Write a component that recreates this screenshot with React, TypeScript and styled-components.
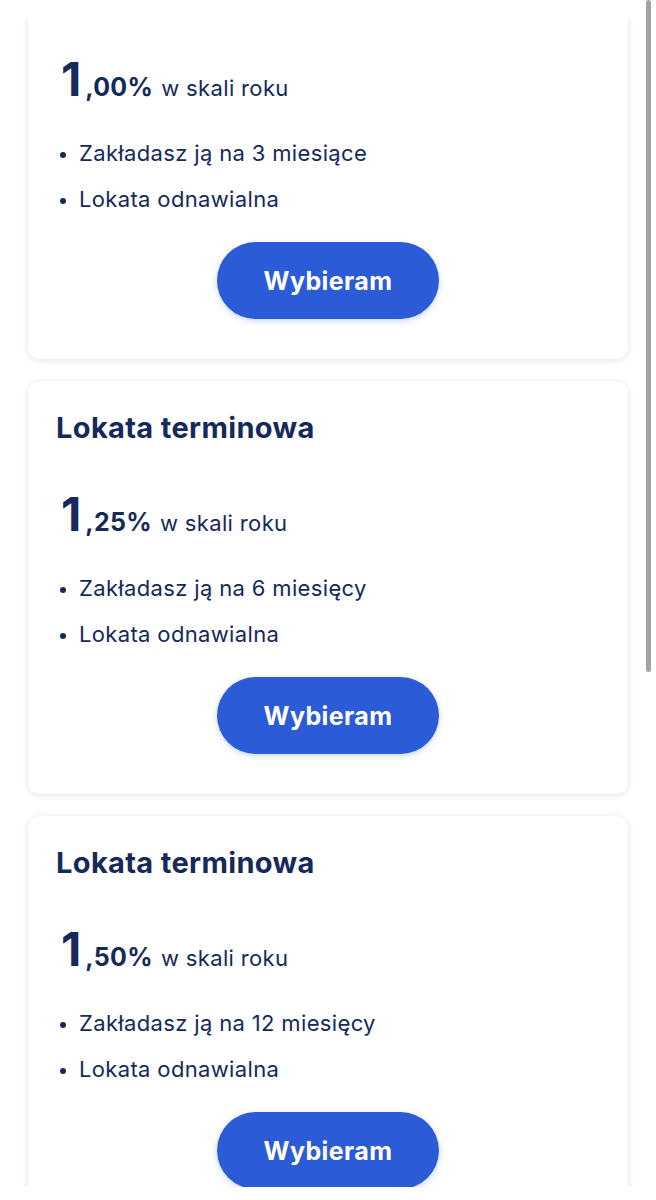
import React from 'react';
import styled, { createGlobalStyle } from 'styled-components';

interface IDeposit {
  id: number;
  rate: string;
  months: string;
}

const deposits: IDeposit[] = [
  { id: 1, rate: '00', months: '3 miesiące' },
  { id: 2, rate: '25', months: '6 miesięcy' },
  { id: 3, rate: '50', months: '12 miesięcy' },
];

const GlobalStyle = createGlobalStyle`
  body {
    margin: 0;
    background: #ffffff;
    font-family: Inter, "Noto Sans", sans-serif;
    color: #16295b;
  }
`;

const App: React.FC = () => {
  return (
    <Frame>
      <GlobalStyle />
      <ScrollThumb />
      <Viewport>
        <CardList>
          {deposits.map(({ id, rate, months }) => (
            <Card key={id}>
              <Title>Lokata terminowa</Title>
              <RateRow>
                <RateWhole>1</RateWhole>
                <RateFraction>,{rate}%</RateFraction>
                <RateLabel>w skali roku</RateLabel>
              </RateRow>
              <Features>
                <Feature>Zakładasz ją na {months}</Feature>
                <Feature>Lokata odnawialna</Feature>
              </Features>
              <ButtonRow>
                <ChooseButton>Wybieram</ChooseButton>
              </ButtonRow>
            </Card>
          ))}
        </CardList>
      </Viewport>
    </Frame>
  );
};

const Frame = styled.div`
  position: relative;
  width: 656px;
  height: 1200px;
  padding-top: 20px;
  box-sizing: border-box;
  overflow: hidden;
`;

const ScrollThumb = styled.div`
  position: absolute;
  top: 0;
  right: 5px;
  width: 5px;
  height: 672px;
  border-radius: 3px;
  background: #a3a3a3;
`;

const Viewport = styled.div`
  height: 1167px;
  overflow: hidden;
`;

const CardList = styled.div`
  display: flex;
  flex-direction: column;
  gap: 22px;
  margin-top: -74px;
  padding: 0 28px;
`;

const Card = styled.section`
  background: #ffffff;
  border-radius: 12px;
  box-shadow: 0 1px 6px rgba(0, 0, 0, 0.12);
  padding: 29px 28px 40px;
`;

const Title = styled.h2`
  margin: 0;
  font-size: 29px;
  line-height: 36px;
  font-weight: 700;
  letter-spacing: 0.35px;
  color: #16295b;
`;

const RateRow = styled.div`
  display: flex;
  align-items: baseline;
  margin-top: 45px;
  height: 46px;
  padding-left: 5px;
`;

const RateWhole = styled.span`
  font-size: 47px;
  line-height: 46px;
  font-weight: 700;
`;

const RateFraction = styled.span`
  font-size: 25px;
  font-weight: 700;
  margin-left: 4px;
  letter-spacing: 0.3px;
`;

const RateLabel = styled.span`
  font-size: 22px;
  font-weight: 400;
  margin-left: 8px;
  letter-spacing: 0.35px;
`;

const Features = styled.ul`
  margin: 28px 0 0;
  padding: 0 0 0 23px;
`;

const Feature = styled.li`
  font-size: 22px;
  line-height: 46px;
  letter-spacing: 0.35px;

  &::marker {
    font-size: 20px;
  }
`;

const ButtonRow = styled.div`
  display: flex;
  justify-content: center;
  margin-top: 20px;
`;

const ChooseButton = styled.button`
  width: 222px;
  height: 77px;
  border: none;
  border-radius: 39px;
  background: #2c5bd8;
  color: #ffffff;
  font-family: Inter, "Noto Sans", sans-serif;
  font-size: 25px;
  font-weight: 700;
  letter-spacing: 0.4px;
  box-shadow: 0 2px 6px rgba(44, 91, 216, 0.25);
  cursor: pointer;
`;

export default App;
